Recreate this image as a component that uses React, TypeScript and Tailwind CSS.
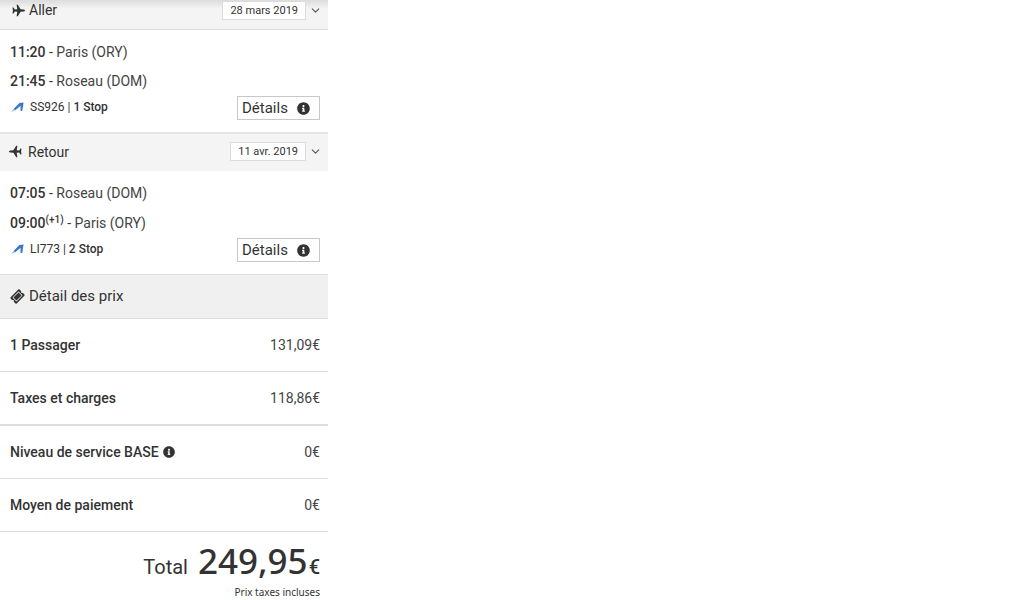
import type { ReactNode } from "react";
import { FaInfoCircle, FaTicketAlt } from "react-icons/fa";
import { FiChevronDown } from "react-icons/fi";

interface Stop {
  time: string;
  place: string;
  dayShift?: string;
}

interface Flight {
  stops: Stop[];
  code: string;
  stopCount: string;
}

const outbound: Flight = {
  stops: [
    { time: "11:20", place: "Paris (ORY)" },
    { time: "21:45", place: "Roseau (DOM)" },
  ],
  code: "SS926",
  stopCount: "1 Stop",
};

const inbound: Flight = {
  stops: [
    { time: "07:05", place: "Roseau (DOM)" },
    { time: "09:00", place: "Paris (ORY)", dayShift: "(+1)" },
  ],
  code: "LI773",
  stopCount: "2 Stop",
};

function PlaneIcon({ back }: { back?: boolean }) {
  return (
    <svg
      viewBox="0 0 13 13"
      className={back ? "size-[13px] -scale-x-100" : "size-[13px]"}
      fill="currentColor"
      aria-hidden="true"
    >
      <path d="M13 6.5c0 .7-.8 1.1-1.8 1.1L8.6 7.8 5.8 12.3H4.6L5.3 7.8 2.8 7.5 1.5 9.4H.5L.9 6.5.5 3.6h1L2.8 5.5l2.5-.3L4.6.7h1.2l2.8 4.5 2.6.2c1 0 1.8.4 1.8 1.1Z" />
    </svg>
  );
}

function AirlineLogo() {
  return (
    <svg viewBox="0 0 14 10" className="h-[10px] w-[14px] shrink-0" aria-hidden="true">
      <path d="M0.8 9.4 L7 4 L5.4 8 L2.8 9.6 Z" fill="#b4c3e6" />
      <path d="M4 6.6 L9.4 1 L13.6 0.4 L12.2 9.2 L10.4 8.4 L10.6 3.8 L5 8.4 Z" fill="#3a78c9" />
    </svg>
  );
}

function DateButton({ date }: { date: string }) {
  return (
    <button type="button" className="flex items-center gap-[3px] text-[11px]">
      <span className="flex h-[19px] items-center border border-[#dcdcdc] bg-white px-[7px] pt-px">
        {date}
      </span>
      <FiChevronDown className="size-[13px] text-[#555555]" />
    </button>
  );
}

function FlightBody({ flight }: { flight: Flight }) {
  return (
    <div className="pt-2 pr-2 pb-3 pl-[10px]">
      {flight.stops.map((stop) => (
        <p
          key={stop.time}
          className={`text-sm ${stop.dayShift ? "h-[30px] leading-[30px]" : "h-[29px] leading-[29px]"}`}
        >
          <span className="font-medium">{stop.time}</span>
          {stop.dayShift && (
            <sup className="text-[10px] font-medium">{stop.dayShift}</sup>
          )}
          {" - "}
          <span className="text-[#444444]">{stop.place}</span>
        </p>
      ))}
      <div className="flex h-6 items-start justify-between">
        <p className="flex items-center gap-[6px] text-xs leading-[22px]">
          <AirlineLogo />
          <span>
            {flight.code} | <span className="font-medium">{flight.stopCount}</span>
          </span>
        </p>
        <button
          type="button"
          className="flex h-6 w-[83px] items-center justify-between border border-[#c8c8c8] bg-white pr-[9px] pl-1 text-[15px]"
        >
          Détails
          <FaInfoCircle className="size-[13px]" />
        </button>
      </div>
    </div>
  );
}

function PriceRow({ label, price, thick }: { label: ReactNode; price: string; thick?: boolean }) {
  return (
    <div
      className={`flex items-center justify-between border-[#dedede] pr-2 pl-[10px] text-sm leading-[52px] ${
        thick ? "border-b-2" : "border-b"
      }`}
    >
      <dt className="flex items-center gap-1 font-medium">{label}</dt>
      <dd className="text-[#444444]">{price}</dd>
    </div>
  );
}

export default function App() {
  return (
    <main className="w-full max-w-[328px] bg-white font-[Roboto,sans-serif] text-[#333333]">
      <section>
        <header className="flex h-[30px] items-start justify-between border-b border-[#dcdcdc] bg-linear-to-b from-[#dcdcdc] to-[#f4f4f4] to-30% pt-px pr-[6px] pl-3">
          <h2 className="flex items-center gap-1 text-sm leading-[18px]">
            <PlaneIcon />
            Aller
          </h2>
          <DateButton date="28 mars 2019" />
        </header>
        <FlightBody flight={outbound} />
      </section>

      <section>
        <header className="flex h-[39px] items-center justify-between border-t-2 border-[#e4e4e4] bg-[#f4f4f4] pr-[6px] pb-[2px] pl-[9px]">
          <h2 className="flex items-center gap-[6px] text-sm">
            <PlaneIcon back />
            Retour
          </h2>
          <DateButton date="11 avr. 2019" />
        </header>
        <FlightBody flight={inbound} />
      </section>

      <section>
        <header className="flex h-[45px] items-center border-y border-[#dedede] bg-[#f0f0f0] px-[11px]">
          <h2 className="flex items-center gap-[5px] text-[15px]">
            <FaTicketAlt className="size-[13px] -rotate-45" />
            Détail des prix
          </h2>
        </header>
        <dl>
          <PriceRow label="1 Passager" price="131,09€" />
          <PriceRow label="Taxes et charges" price="118,86€" thick />
          <PriceRow
            label={
              <>
                Niveau de service BASE
                <FaInfoCircle className="size-3" />
              </>
            }
            price="0€"
          />
          <PriceRow label="Moyen de paiement" price="0€" />
        </dl>
        <div className="pt-[7px] pr-2 text-right">
          <p className="flex h-11 items-baseline justify-end text-xl leading-[44px] font-medium">
            <span className="mr-[10px] font-normal">Total</span>
            <span className="font-['Noto_Sans',sans-serif] text-[35px]">249,95</span>
            <span className="ml-px">€</span>
          </p>
          <p className="mt-px font-['Noto_Sans',sans-serif] text-[10px] leading-4">
            Prix taxes incluses
          </p>
        </div>
      </section>
    </main>
  );
}
